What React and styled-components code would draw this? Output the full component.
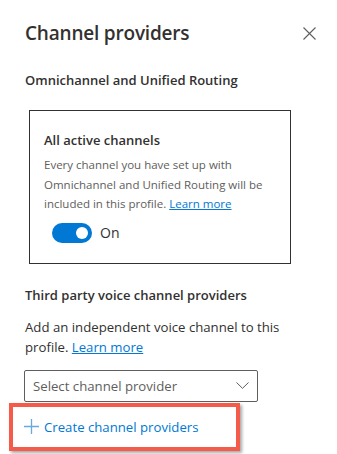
import React from 'react';
import styled, { createGlobalStyle } from 'styled-components';

const GlobalStyle = createGlobalStyle`
    body {
        margin: 0;
        background: #ffffff;
        font-family: "Open Sans", "Noto Sans", sans-serif;
        color: #323130;
    }
`;

const Panel = styled.div`
    width: 337px;
    height: 454px;
    box-sizing: border-box;
    padding: 18px 20px 0 25px;
    overflow: hidden;
`;

const Header = styled.div`
    display: flex;
    align-items: center;
    justify-content: space-between;
    height: 30px;
`;

const Title = styled.h1`
    margin: 0;
    font-size: 19px;
    font-weight: 600;
    letter-spacing: -0.2px;
    color: #323130;
`;

const CloseButton = styled.button`
    border: none;
    background: none;
    padding: 0;
    width: 13px;
    height: 13px;
    display: flex;
    margin-right: 1px;
`;

const SectionTitle = styled.h2`
    margin: ${(p) => p.$top}px 0 0;
    font-size: 13px;
    line-height: 20px;
    font-weight: 600;
    color: #323130;
`;

const Card = styled.div`
    box-sizing: border-box;
    width: 262px;
    margin: 20px 0 0 4px;
    padding: 19px 14px 20px;
    border: 1px solid #323130;
`;

const CardTitle = styled.div`
    font-size: 13px;
    line-height: 20px;
    font-weight: 600;
`;

const Description = styled.p`
    margin: 5px 0 0;
    font-size: 11.5px;
    line-height: 19.5px;
    color: #605e5c;
`;

const Link = styled.a`
    color: #0078d4;
    text-decoration: underline;
    cursor: pointer;
`;

const ToggleRow = styled.div`
    display: flex;
    align-items: center;
    gap: 8px;
    margin: 9px 0 0 8px;
    font-size: 14px;
    color: #323130;
`;

const Track = styled.span`
    position: relative;
    width: 40px;
    height: 20px;
    border-radius: 10px;
    background: ${(p) => (p.$on ? '#0078d4' : '#ffffff')};
`;

const Knob = styled.span`
    position: absolute;
    top: 4px;
    left: ${(p) => (p.$on ? '24px' : '4px')};
    width: 12px;
    height: 12px;
    border-radius: 50%;
    background: #ffffff;
`;

const Text = styled.p`
    margin: 12px 0 0;
    font-size: 13.2px;
    line-height: 20px;
    color: #323130;
    width: 270px;
`;

const Select = styled.div`
    box-sizing: border-box;
    display: flex;
    align-items: center;
    justify-content: space-between;
    width: 234px;
    height: 32px;
    margin: 13px 0 0 -1px;
    padding: 0 8px 0 8px;
    border: 1px solid #605e5c;
    border-radius: 2px;
    font-size: 13.2px;
    color: #605e5c;
`;

const Highlight = styled.div`
    box-sizing: border-box;
    display: flex;
    align-items: center;
    gap: 5px;
    width: 231px;
    height: 48px;
    margin: 1px 0 0 -16px;
    padding-left: 11px;
    border: 4px solid #f45b4b;
    box-shadow: 2px 2px 3px rgba(0, 0, 0, 0.35);
    color: #0078d4;
    font-size: 13.2px;
`;

function Toggle({ on, label }) {
    return (
        <ToggleRow>
            <Track $on={on}>
                <Knob $on={on} />
            </Track>
            {label}
        </ToggleRow>
    );
}

export default function App() {
    return (
        <>
            <GlobalStyle />
            <Panel>
                <Header>
                    <Title>Channel providers</Title>
                    <CloseButton aria-label="Close">
                        <svg width="13" height="13" viewBox="0 0 13 13">
                            <path d="M0.5 0.5 L12.5 12.5 M12.5 0.5 L0.5 12.5" stroke="#605e5c" strokeWidth="1.1" fill="none" />
                        </svg>
                    </CloseButton>
                </Header>
                <SectionTitle $top={22}>Omnichannel and Unified Routing</SectionTitle>
                <Card>
                    <CardTitle>All active channels</CardTitle>
                    <Description>
                        Every channel you have set up with Omnichannel and Unified Routing will be
                        included in this profile. <Link>Learn more</Link>
                    </Description>
                    <Toggle on label="On" />
                </Card>
                <SectionTitle $top={21}>Third party voice channel providers</SectionTitle>
                <Text>
                    Add an independent voice channel to this profile. <Link>Learn more</Link>
                </Text>
                <Select>
                    Select channel provider
                    <svg width="13" height="7" viewBox="0 0 13 7">
                        <path d="M0.5 0.5 L6.5 6.3 L12.5 0.5" stroke="#605e5c" strokeWidth="1" fill="none" />
                    </svg>
                </Select>
                <Highlight>
                    <svg width="15" height="15" viewBox="0 0 15 15">
                        <path d="M7.5 0 V15 M0 7.5 H15" stroke="#6aa8e0" strokeWidth="1.3" fill="none" />
                    </svg>
                    Create channel providers
                </Highlight>
            </Panel>
        </>
    );
}
